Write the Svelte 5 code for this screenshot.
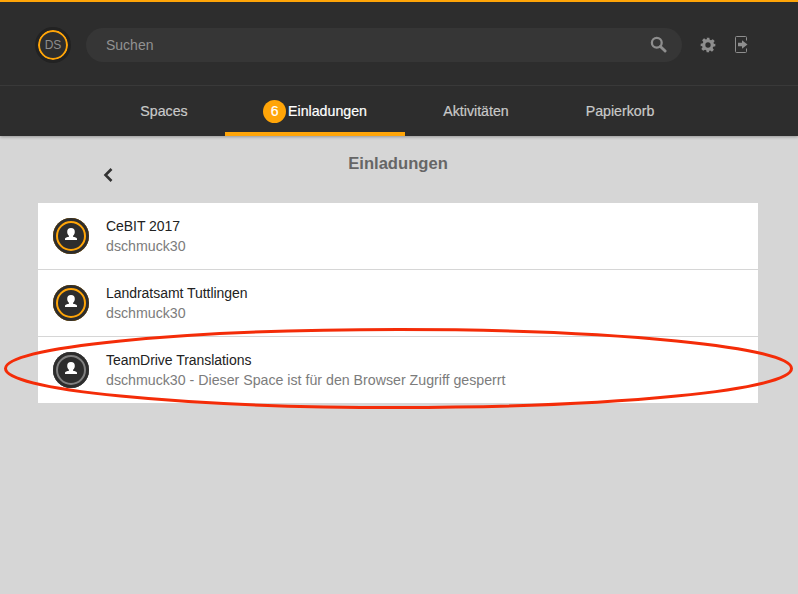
<script>
	const tabs = [
		{ label: 'Spaces' },
		{ label: 'Einladungen', badge: 6, active: true },
		{ label: 'Aktivitäten' },
		{ label: 'Papierkorb' }
	];

	const invitations = [
		{ title: 'CeBIT 2017', sub: 'dschmuck30' },
		{ title: 'Landratsamt Tuttlingen', sub: 'dschmuck30' },
		{ title: 'TeamDrive Translations', sub: 'dschmuck30 - Dieser Space ist für den Browser Zugriff gesperrt', locked: true }
	];
</script>

<div class="page">
	<header>
		<div class="top">
			<div class="avatar"><span>DS</span></div>
			<div class="search">
				<span>Suchen</span>
				<svg width="17" height="17" viewBox="0 0 18 18">
					<circle cx="7.2" cy="7.2" r="5.2" fill="none" stroke="#8e8e8e" stroke-width="2.4" />
					<path d="M11 11l5 5" stroke="#8e8e8e" stroke-width="3" stroke-linecap="round" />
				</svg>
			</div>
			<svg class="gear" width="16" height="16" viewBox="0 0 24 24">
				<path fill="#8e8e8e" fill-rule="evenodd" d="M10 1h4l.6 3.2 1.900.8 2.700-1.800 2.800 2.800-1.800 2.700.8 1.900L23 10v4l-3.200.6-.8 1.900 1.800 2.700-2.800 2.800-2.700-1.800-1.900.8L14 23h-4l-.6-3.200-1.900-.8-2.700 1.800-2.800-2.800 1.800-2.700-.8-1.900L1 14v-4l3.200-.6.8-1.900-1.800-2.700 2.800-2.800 2.700 1.800 1.900-.8zM12 8a4 4 0 100 8 4 4 0 000-8z" />
			</svg>
			<svg class="logout" width="13" height="17" viewBox="0 0 13 17">
				<path d="M11.500 4.500V1.500a1 1 0 00-1-1H1.500a1 1 0 00-1 1v14a1 1 0 001 1h9a1 1 0 001-1v-3" fill="none" stroke="#8e8e8e" stroke-width="1" />
				<path d="M3 6.800h4V4.300l5.500 4.200L7 12.700v-2.500H3z" fill="#8e8e8e" />
			</svg>
		</div>
		<nav>
			{#each tabs as tab}
				<div class="tab" class:active={tab.active}>
					{#if tab.badge}<span class="badge">{tab.badge}</span>{/if}
					{tab.label}
				</div>
			{/each}
		</nav>
	</header>

	<main>
		<div class="title-row">
			<svg class="back" width="12" height="16" viewBox="0 0 12 16">
				<path d="M9.500 2L3.500 8l6 6" fill="none" stroke="#333" stroke-width="2.600" />
			</svg>
			<h1>Einladungen</h1>
		</div>

		<ul>
			{#each invitations as item}
				<li>
					<div class="icon" class:locked={item.locked}>
						<svg width="18" height="18" viewBox="0 0 18 18">
							<path fill="#fff" d="M9 1a3.800 3.800 0 013.800 3.900c0 1.800-.9 3.200-1.800 3.900v1c1.800.5 4 .8 4 2V13H3v-1.200c0-1.200 2.200-1.500 4-2v-1c-.9-.7-1.800-2.100-1.800-3.900A3.800 3.800 0 019 1z" />
						</svg>
					</div>
					<div class="text">
						<div class="name">{item.title}</div>
						<div class="sub">{item.sub}</div>
					</div>
				</li>
			{/each}
		</ul>
	</main>

	<svg class="circle" width="798" height="594" viewBox="0 0 798 594">
		<ellipse cx="398.500" cy="368.500" rx="393" ry="39" fill="none" stroke="#f42c08" stroke-width="3" />
	</svg>
</div>

<style>
	:global(body) {
		margin: 0;
		background: #d6d6d6;
	}

	.page {
		position: relative;
		width: 798px;
		height: 594px;
		overflow: hidden;
		background: #d6d6d6;
		font-family: "Liberation Sans", Arial, sans-serif;
	}

	header {
		background: #2d2d2d;
		border-top: 2px solid #ffa508;
		box-shadow: 0 1px 3px rgba(0, 0, 0, 0.3);
	}

	.top {
		height: 84px;
		box-sizing: border-box;
		display: flex;
		align-items: center;
		padding: 2px 50px 0 35px;
		border-bottom: 1px solid #393939;
	}

	.avatar {
		width: 36px;
		height: 36px;
		box-sizing: border-box;
		flex: none;
		border-radius: 50%;
		background: #2d2d2d;
		border: 3px solid #222;
		box-shadow: inset 0 0 0 2px #ffa508;
		display: flex;
		align-items: center;
		justify-content: center;
		color: #8e8e8e;
		font-size: 12px;
	}

	.search {
		flex: 1;
		height: 34px;
		margin-left: 15px;
		padding: 0 15px 0 20px;
		border-radius: 17px;
		background: #363636;
		display: flex;
		align-items: center;
		justify-content: space-between;
		color: #929292;
		font-size: 14px;
	}

	.gear {
		margin-left: 18px;
		flex: none;
	}

	.logout {
		margin-left: 19px;
		flex: none;
	}

	nav {
		height: 50px;
		display: grid;
		grid-template-columns: 122px 180px 142px 146px;
		padding-left: 103px;
	}

	.tab {
		box-sizing: border-box;
		height: 50px;
		display: flex;
		align-items: center;
		justify-content: center;
		gap: 2px;
		color: #c9c9c9;
		font-size: 14.2px;
		-webkit-text-stroke: 0.2px currentColor;
	}

	.tab.active {
		color: #fff;
		border-bottom: 4px solid #ffa508;
		padding-top: 4px;
	}

	.badge {
		width: 23px;
		height: 23px;
		border-radius: 50%;
		background: #ffa508;
		color: #fff;
		display: flex;
		align-items: center;
		justify-content: center;
		font-size: 14px;
	}

	main {
		padding: 0 40px 0 38px;
	}

	.title-row {
		position: relative;
		height: 67px;
		text-align: center;
	}

	h1 {
		margin: 0;
		padding-top: 19px;
		font-size: 16.600px;
		font-weight: 700;
		color: #666;
		line-height: 18px;
	}

	.back {
		position: absolute;
		left: 64px;
		top: 31px;
	}

	ul {
		list-style: none;
		margin: 0;
		padding: 0;
		background: #fff;
	}

	li {
		height: 67px;
		box-sizing: border-box;
		padding-left: 15px;
		display: flex;
		align-items: center;
		gap: 17px;
		border-bottom: 1px solid #d6d6d6;
	}

	li:last-child {
		height: 66px;
		border-bottom: 0;
	}

	.icon {
		width: 36px;
		height: 36px;
		box-sizing: border-box;
		border-radius: 50%;
		background: #2d2d2d;
		display: flex;
		align-items: center;
		justify-content: center;
		box-shadow: inset 0 0 0 3px #2d2d2d, inset 0 0 0 5px #ffa508;
	}

	.icon.locked {
		box-shadow: inset 0 0 0 3px #2d2d2d, inset 0 0 0 5px #808080;
	}

	.name {
		color: #222;
		font-size: 14px;
		letter-spacing: -0.04px;
		line-height: 18px;
	}

	.sub {
		color: #7c7c7c;
		font-size: 14.2px;
		line-height: 18px;
		margin-top: 2px;
	}

	.circle {
		position: absolute;
		left: 0;
		top: 0;
		pointer-events: none;
	}
</style>
